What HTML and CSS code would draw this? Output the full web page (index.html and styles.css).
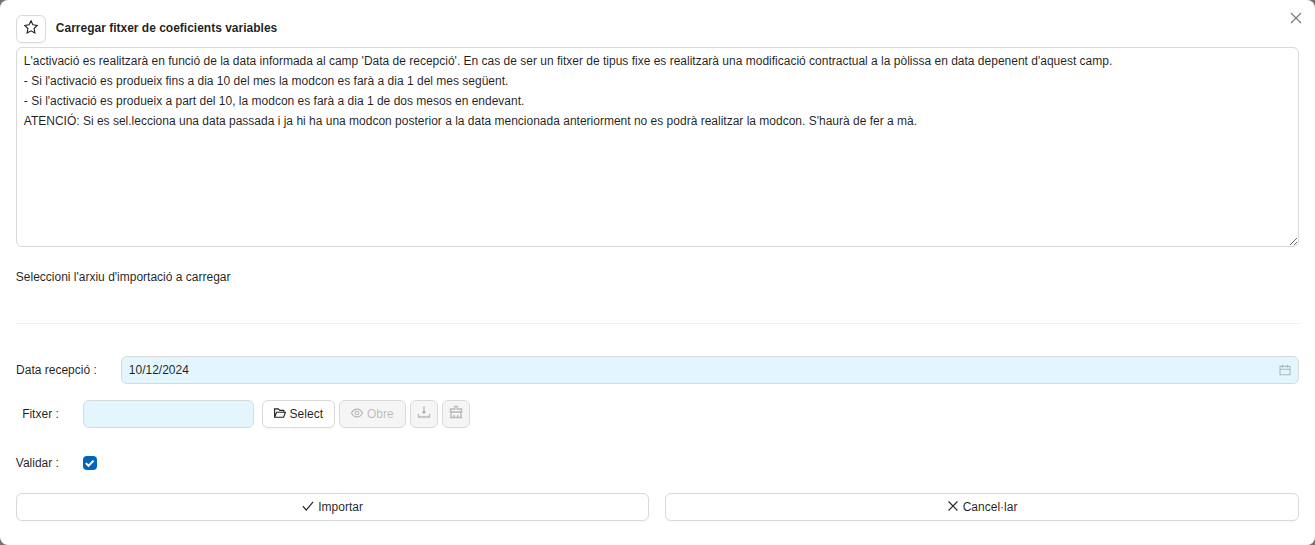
FILE: index.html
```html
<!DOCTYPE html>
<html lang="ca">
<head>
<meta charset="utf-8">
<title>Carregar fitxer de coeficients variables</title>
<link rel="stylesheet" href="styles.css">
</head>
<body>
<main class="modal">
  <button class="close" aria-label="Tancar"><svg class="close-icon" viewBox="0 0 14 14"><path d="M2 2l10 10M12 2L2 12"/></svg></button>
  <header class="header">
    <button class="btn btn-star" aria-label="Preferit"><svg class="icon" viewBox="0 0 14 14"><path d="M7 .8l1.9 4 4.4.6-3.2 3.1.8 4.4L7 10.8l-3.9 2.1.8-4.4L.7 5.4l4.4-.6z"/></svg></button>
    <h1 class="title">Carregar fitxer de coeficients variables</h1>
  </header>
  <textarea class="notes" spellcheck="false">L'activació es realitzarà en funció de la data informada al camp 'Data de recepció'. En cas de ser un fitxer de tipus fixe es realitzarà una modificació contractual a la pòlissa en data depenent d'aquest camp.
- Si l'activació es produeix fins a dia 10 del mes la modcon es farà a dia 1 del mes següent.
- Si l'activació es produeix a part del 10, la modcon es farà a dia 1 de dos mesos en endevant.
ATENCIÓ: Si es sel.lecciona una data passada i ja hi ha una modcon posterior a la data mencionada anteriorment no es podrà realitzar la modcon. S'haurà de fer a mà.</textarea>
  <p class="hint">Seleccioni l'arxiu d'importació a carregar</p>
  <hr class="divider">
  <div class="row row-date">
    <span class="label label-date">Data recepció :</span>
    <div class="field field-date"><span>10/12/2024</span><svg class="icon icon-calendar" viewBox="0 0 12 12"><path d="M1 2.4h10v8.4H1zM1 5.2h10M3.6 .7v2.7M8.4 .7v2.7"/></svg></div>
  </div>
  <div class="row row-file">
    <span class="label">Fitxer :</span>
    <div class="field field-file"></div>
    <div class="actions">
      <button class="btn btn-select"><svg class="icon icon-small" viewBox="0 0 12 12"><path d="M.6 10.2V1.9h3.7l1.4 1.5h4.1v1.9M.6 10.2l2-4.9h8.8l-1.8 4.9z"/></svg>Select</button>
      <button class="btn btn-open" disabled><svg class="icon icon-small" viewBox="0 0 12 12"><path d="M.5 6C3 .8 9 .8 11.5 6 9 11.2 3 11.2 .5 6z"/><circle cx="6" cy="6" r="1.8"/></svg>Obre</button>
      <button class="btn btn-square" disabled aria-label="Descarregar"><svg class="icon icon-bold" viewBox="0 0 14 14"><path d="M7 1.2v7M1.5 9v3h11V9"/><path class="solid" d="M4.9 6.4h4.2L7 9.1z"/></svg></button>
      <button class="btn btn-square" disabled aria-label="Netejar"><svg class="icon icon-bold" viewBox="0 0 14 14"><path d="M5.8 4V1.3h2.4V4h4.3v3h-11V4zM2.4 7l-.8 5.5h10.8L11.6 7M5 12.5V10M8.8 12.5V10"/></svg></button>
    </div>
  </div>
  <div class="row row-check">
    <span class="label">Validar :</span>
    <span class="checkbox" role="checkbox" aria-checked="true" aria-label="Validar"><svg class="check-mark" viewBox="0 0 14 14"><path d="M2.8 7.1l2.7 2.7 5.1-5.2"/></svg></span>
  </div>
  <footer class="footer">
    <button class="btn"><svg class="icon icon-small" viewBox="0 0 12 12"><path d="M.9 6.2l3.3 4L11.1 1.8"/></svg>Importar</button>
    <button class="btn"><svg class="icon icon-small" viewBox="0 0 12 12"><path d="M1.6 1.5l8.8 9M10.4 1.5l-8.8 9"/></svg>Cancel·lar</button>
  </footer>
</main>
</body>
</html>
```
FILE: styles.css
```css
* { box-sizing: border-box; }
body {
  margin: 0;
  background: #737373;
  color: rgba(0, 0, 0, 0.88);
  font: 12px/20px "Liberation Sans", Arial, sans-serif;
}
.modal {
  position: relative;
  height: 545px;
  padding: 15px 16.2px 24px 15.8px;
  background: #fff;
  border-radius: 8px;
}
.close {
  position: absolute;
  top: 11px;
  right: 12px;
  width: 14px;
  height: 14px;
  padding: 0;
  border: 0;
  background: none;
  color: rgba(0, 0, 0, 0.5);
}
.close-icon { display: block; width: 14px; height: 14px; stroke-width: 1.3; }
svg { fill: none; stroke: currentColor; stroke-width: 1.1; flex: none; }
.solid { fill: currentColor; stroke: none; }
.icon { width: 14px; height: 14px; }
.icon-small { width: 12px; height: 12px; margin-top: -2px; }
.icon-bold { stroke-width: 1.3; }
.btn {
  display: flex;
  align-items: center;
  justify-content: center;
  gap: 4px;
  height: 28px;
  padding: 0;
  border: 1px solid #d9d9d9;
  border-radius: 6px;
  background: #fff;
  color: rgba(0, 0, 0, 0.88);
  font: inherit;
  box-shadow: 0 2px 0 rgba(0, 0, 0, 0.02);
}
.btn:disabled {
  background: #f5f5f5;
  color: rgba(0, 0, 0, 0.25);
  box-shadow: none;
}
.header { display: flex; gap: 10px; height: 32px; }
.btn-star { width: 30px; padding-bottom: 4px; }
.title { margin: 3px 0 0; font-size: 12px; line-height: 20px; font-weight: 700; }
.notes {
  display: block;
  width: 100%;
  height: 200px;
  padding: 3px 7px;
  border: 1px solid #d9d9d9;
  border-radius: 6px;
  outline: 0;
  background: #fff;
  color: inherit;
  font: inherit;
  resize: vertical;
}
.hint { margin: 20px 0 36px; }
.divider { height: 1px; margin: 0 0 32px; border: 0; background: #f0f0f0; }
.row { display: flex; align-items: center; }
.label { width: 43px; margin-right: 24px; text-align: right; white-space: nowrap; }
.label-date { width: 81px; }
.field {
  display: flex;
  align-items: center;
  justify-content: space-between;
  height: 28px;
  padding: 0 7px;
  border: 1px solid #d9d9d9;
  border-radius: 6px;
  background: #e3f6fe;
}
.field-date { flex: 1; }
.icon-calendar { width: 12px; height: 12px; color: rgba(0, 0, 0, 0.25); }
.row-file { margin-top: 16px; }
.field-file { width: 171px; margin-right: 8px; }
.actions { display: flex; gap: 4px; }
.btn-select { width: 73px; }
.btn-open { width: 67px; }
.btn-square { width: 28px; padding-bottom: 4px; }
.row-check { height: 20px; margin-top: 25px; }
.checkbox { width: 14px; height: 14px; border-radius: 4px; background: #0066bd; color: #fff; }
.check-mark { display: block; width: 14px; height: 14px; stroke-width: 2; }
.footer { display: grid; grid-template-columns: 1fr 1fr; gap: 16px; margin-top: 20px; }
```
